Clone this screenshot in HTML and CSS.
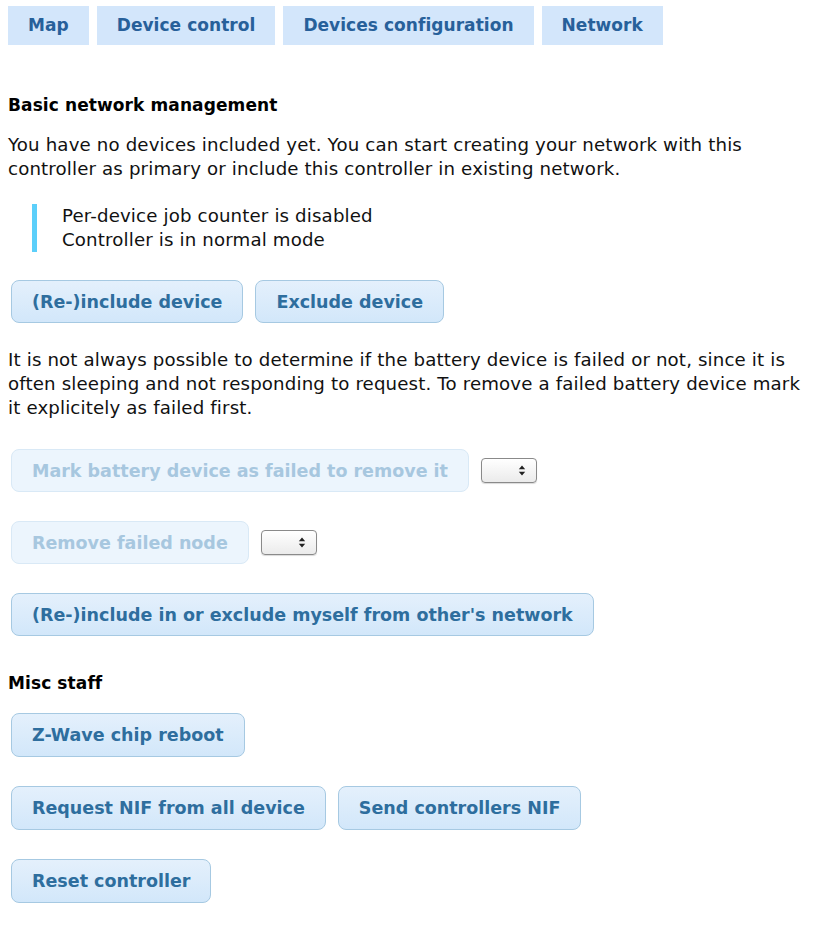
FILE: index.html
```html
<!DOCTYPE html>
<html>
<head>
<meta charset="utf-8">
<link rel="stylesheet" href="styles.css">
</head>
<body>
<div class="page">
  <nav class="tabs">
    <a class="tab">Map</a>
    <a class="tab">Device control</a>
    <a class="tab">Devices configuration</a>
    <a class="tab">Network</a>
  </nav>

  <h3 class="heading first">Basic network management</h3>
  <p class="text">You have no devices included yet. You can start creating your network with this controller as primary or include this controller in existing network.</p>
  <blockquote class="note">
    <div>Per-device job counter is disabled</div>
    <div>Controller is in normal mode</div>
  </blockquote>
  <div class="row r1">
    <button class="btn">(Re-)include device</button>
    <button class="btn">Exclude device</button>
  </div>
  <p class="text t2">It is not always possible to determine if the battery device is failed or not, since it is often sleeping and not responding to request. To remove a failed battery device mark it explicitely as failed first.</p>
  <div class="row">
    <button class="btn disabled">Mark battery device as failed to remove it</button>
    <div class="select"><svg width="8" height="11" viewBox="0 0 8 11"><path d="M4 0.5 L7.2 4.3 H0.8 Z M4 10.5 L7.2 6.7 H0.8 Z" fill="#222"/></svg></div>
  </div>
  <div class="row">
    <button class="btn disabled">Remove failed node</button>
    <div class="select"><svg width="8" height="11" viewBox="0 0 8 11"><path d="M4 0.5 L7.2 4.3 H0.8 Z M4 10.5 L7.2 6.7 H0.8 Z" fill="#222"/></svg></div>
  </div>
  <div class="row">
    <button class="btn">(Re-)include in or exclude myself from other's network</button>
  </div>

  <h3 class="heading second">Misc staff</h3>
  <div class="misc">
    <div class="row r-misc">
      <button class="btn">Z-Wave chip reboot</button>
    </div>
    <div class="row">
      <button class="btn">Request NIF from all device</button>
      <button class="btn">Send controllers NIF</button>
    </div>
    <div class="row">
      <button class="btn">Reset controller</button>
    </div>
  </div>
</div>
</body>
</html>
```

FILE: styles.css
```css
html, body {
  margin: 0;
  padding: 0;
  background: #ffffff;
}

body {
  font-family: "DejaVu Sans", "Liberation Sans", sans-serif;
  font-size: 18.2px;
  letter-spacing: 0.14px;
  color: #111;
}

.page {
  width: 808px;
  padding: 6px 8px 0 8px;
}

.tabs {
  display: flex;
  gap: 8px;
}

.tab {
  display: block;
  background: #d3e6fb;
  color: #27609a;
  font-weight: bold;
  font-size: 17px;
  letter-spacing: 0.05px;
  height: 39px;
  line-height: 39px;
  padding: 0 20px;
  text-decoration: none;
}

.heading {
  margin: 0;
  font-size: 17px;
  letter-spacing: 0.1px;
  font-weight: bold;
  line-height: 24px;
  color: #000;
}

.heading.first {
  margin-top: 48px;
}

.heading.second {
  margin-top: 35px;
}

.text {
  margin: 16px 0 0 0;
  line-height: 24px;
}

.text.t2 {
  margin-top: 25px;
}

.note {
  margin: 23px 0 0 24px;
  padding: 0 0 0 25px;
  border-left: 5px solid #5ccffa;
  line-height: 24px;
}

.row {
  display: flex;
  align-items: center;
  gap: 12px;
  margin: 29px 0 0 3px;
}

.row.r1 {
  margin-top: 28px;
}

.row.r-misc {
  margin-top: 18px;
}

.btn {
  font-family: inherit;
  font-size: 17.5px;
  letter-spacing: 0;
  font-weight: bold;
  color: #2e6e9e;
  background: linear-gradient(#e4f0fc 0%, #dcecfb 45%, #d2e7fa 100%);
  border: 1px solid #a6c9e2;
  border-radius: 8px;
  height: 43px;
  padding: 0 20px;
  cursor: pointer;
}

.misc .btn {
  height: 44px;
}

.btn.disabled {
  color: #a7c7df;
  background: #ecf5fd;
  border-color: #d9e9f6;
}

.select {
  width: 56px;
  height: 25px;
  border: 1px solid #8a8a8a;
  border-radius: 4px;
  background: linear-gradient(#ffffff, #ebebeb);
  display: flex;
  align-items: center;
  justify-content: flex-end;
  padding-right: 10px;
  box-sizing: border-box;
  box-shadow: 0 1px 1px rgba(0,0,0,0.15);
}
```
